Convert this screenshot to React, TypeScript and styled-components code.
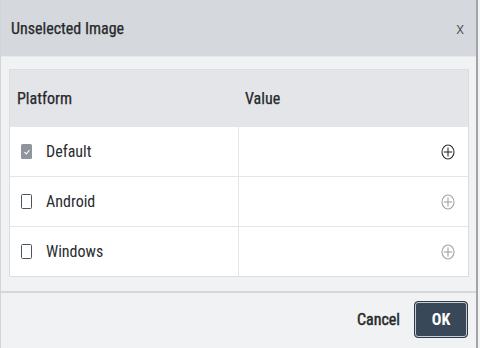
import React from "react";
import styled, { createGlobalStyle } from "styled-components";

const Global = createGlobalStyle`
  html, body { margin: 0; padding: 0; background: #f4f4f5; }
  body { font-family: "Roboto Condensed", Roboto, "Liberation Sans", sans-serif; color: #2a2c30; }
`;

const Dialog = styled.div`
  width: 478px;
  height: 348px;
  box-sizing: border-box;
  border-left: 1px solid #d3d4d6;
  border-right: 2px solid #a2a4a7;
  background: #f1f2f4;
  display: flex;
  flex-direction: column;
`;

const Header = styled.div`
  height: 57px;
  box-sizing: border-box;
  background: #d5d8dc;
  border-bottom: 1px solid #e8e9eb;
  display: flex;
  align-items: center;
  justify-content: space-between;
  padding: 0 12px 0 10px;
`;

const Title = styled.div`
  font-size: 16px;
  font-weight: 400;
  color: #26282c;
  -webkit-text-stroke: 0.25px #26282c;
`;

const Close = styled.div`
  font-family: Roboto, sans-serif;
  font-size: 16px;
  color: #3a3c40;
  font-weight: 300;
`;

const Body = styled.div`
  padding: 12px 7px 14px 8px;
`;

const Table = styled.div`
  border: 1px solid #dcdde0;
  background: #ffffff;
`;

const Row = styled.div<{ $head?: boolean }>`
  display: grid;
  grid-template-columns: 228px 1fr;
  height: ${(p) => (p.$head ? "56px" : "50px")};
  box-sizing: border-box;
  background: ${(p) => (p.$head ? "#e4e5e8" : "#ffffff")};
  border-top: ${(p) => (p.$head ? "none" : "1px solid #e4e5e7")};
`;

const Cell = styled.div<{ $divider?: boolean; $right?: boolean }>`
  display: flex;
  align-items: center;
  gap: 14px;
  padding: 0 13px 0 11px;
  justify-content: ${(p) => (p.$right ? "flex-end" : "flex-start")};
  border-left: ${(p) => (p.$divider ? "1px solid #e4e5e7" : "none")};
  font-size: 16px;
`;

const HeadCell = styled.div`
  display: flex;
  align-items: center;
  padding: 0 7px;
  font-size: 16px;
  font-weight: 400;
  color: #26282c;
  -webkit-text-stroke: 0.25px #26282c;
`;

const Box = styled.span<{ $checked?: boolean }>`
  width: 11px;
  height: 15px;
  box-sizing: border-box;
  border-radius: 1.5px;
  display: inline-flex;
  align-items: center;
  justify-content: center;
  background: ${(p) => (p.$checked ? "#8f959d" : "#ffffff")};
  border: ${(p) => (p.$checked ? "none" : "1.5px solid #4a5360")};
`;

const Label = styled.span`
  color: #2a2c30;
`;

const Footer = styled.div`
  flex: 1;
  border-top: 2px solid #d6d7d9;
  display: flex;
  align-items: flex-start;
  justify-content: flex-end;
  gap: 14px;
  padding: 8px 8px 0 0;
`;

const CancelBtn = styled.button`
  background: none;
  border: none;
  padding: 0;
  height: 36px;
  font-family: inherit;
  font-size: 16px;
  font-weight: 400;
  color: #26282c;
  -webkit-text-stroke: 0.45px #26282c;
`;

const OkBtn = styled.button`
  width: 54px;
  height: 37px;
  box-sizing: border-box;
  border-radius: 4px;
  background: #394858;
  border: 1px solid #2f3a47;
  box-shadow: inset 0 0 0 1px #c9ced4;
  color: #ffffff;
  font-family: inherit;
  font-size: 16px;
  font-weight: 700;
`;

const PlusIcon = ({ color }: { color: string }) => (
  <svg width="14" height="16" viewBox="0 0 14 16">
    <ellipse cx="7" cy="8" rx="6" ry="7" fill="none" stroke={color} strokeWidth="1.1" />
    <line x1="7" y1="3.5" x2="7" y2="12.5" stroke={color} strokeWidth="1.1" />
    <line x1="2.8" y1="8" x2="11.2" y2="8" stroke={color} strokeWidth="1.1" />
  </svg>
);

const Check = () => (
  <svg width="8" height="8" viewBox="0 0 8 8">
    <path d="M1.5 4.2 L3.3 6 L6.5 2" fill="none" stroke="#ffffff" strokeWidth="1.1" />
  </svg>
);

const rows = [
  { name: "Default", checked: true, icon: "#2e3034" },
  { name: "Android", checked: false, icon: "#a0a2a6" },
  { name: "Windows", checked: false, icon: "#a0a2a6" },
];

export default function App() {
  return (
    <>
      <Global />
      <Dialog>
        <Header>
          <Title>Unselected Image</Title>
          <Close>x</Close>
        </Header>
        <Body>
          <Table>
            <Row $head>
              <HeadCell>Platform</HeadCell>
              <HeadCell>Value</HeadCell>
            </Row>
            {rows.map((r) => (
              <Row key={r.name}>
                <Cell>
                  <Box $checked={r.checked}>{r.checked && <Check />}</Box>
                  <Label>{r.name}</Label>
                </Cell>
                <Cell $divider $right>
                  <PlusIcon color={r.icon} />
                </Cell>
              </Row>
            ))}
          </Table>
        </Body>
        <Footer>
          <CancelBtn>Cancel</CancelBtn>
          <OkBtn>OK</OkBtn>
        </Footer>
      </Dialog>
    </>
  );
}
